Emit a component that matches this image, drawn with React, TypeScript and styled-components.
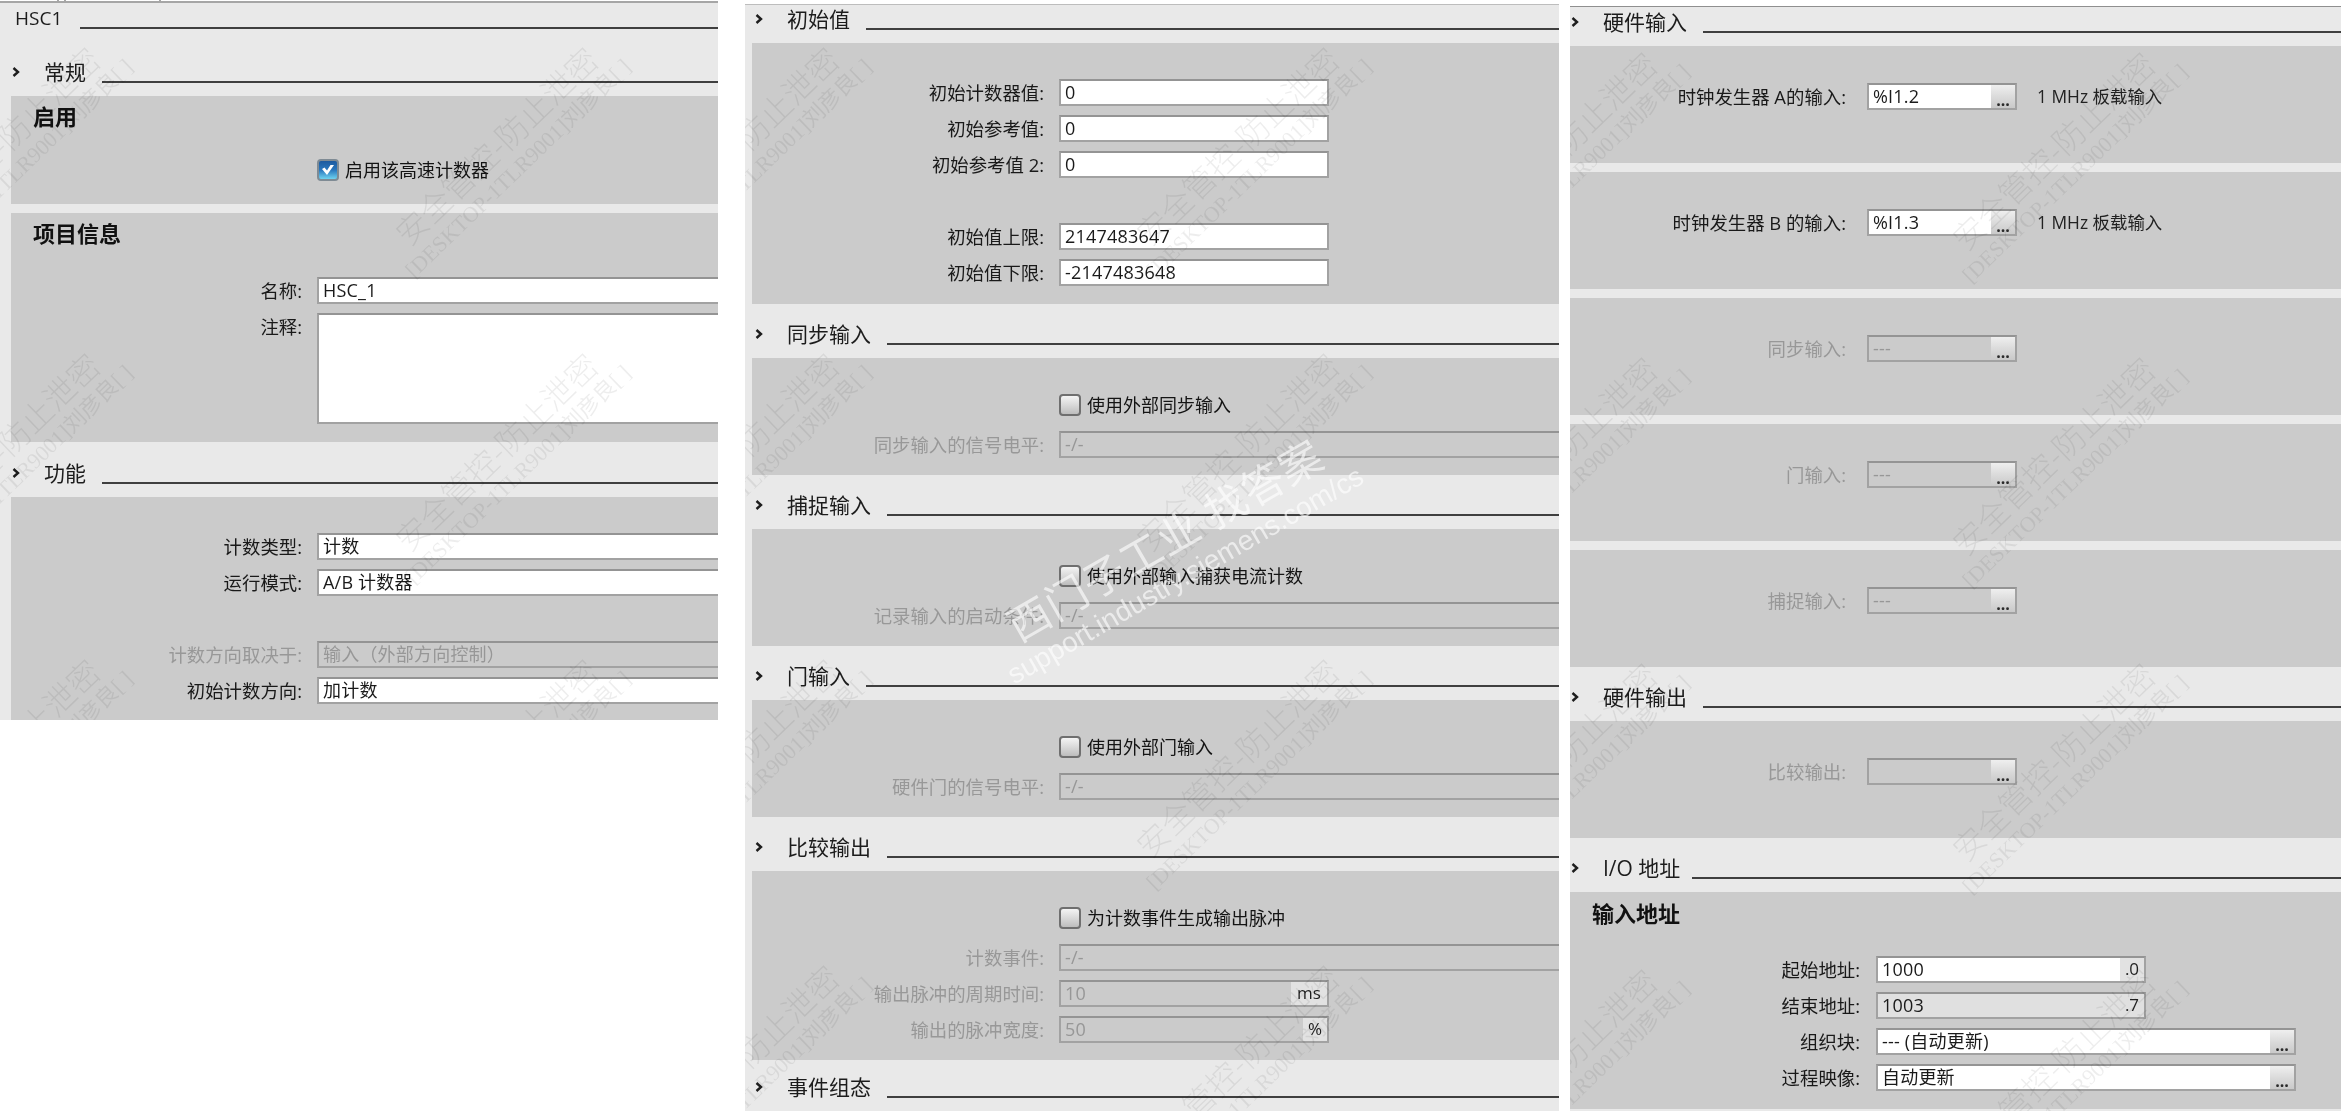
import styled, { createGlobalStyle } from 'styled-components';

const GlobalStyle = createGlobalStyle`
  html, body { margin: 0; padding: 0; background: #fff; }
  body { font-family: "Open Sans", "Noto Sans CJK SC", sans-serif; color: #161616; }
`;

const Page = styled.div`
  display: flex;
  align-items: flex-start;
  width: 2341px;
  height: 1111px;
  overflow: hidden;
  background: #fff;
  filter: blur(0.4px);
`;

const Column = styled.section<{ $width: number; $height: number; $left: number; $top: number; $label: number; $gap: number }>`
  --label: ${({ $label }) => $label}px;
  --gap: ${({ $gap }) => $gap}px;
  position: relative;
  flex: none;
  width: ${({ $width }) => $width}px;
  height: ${({ $height }) => $height}px;
  margin-left: ${({ $left }) => $left}px;
  margin-top: ${({ $top }) => $top}px;
  overflow: hidden;
  background: #e9e9e9;
`;

const TabStrip = styled.div`
  display: flex;
  height: 3px;
  background: #fff;
  border-bottom: 2px solid #a6a6a6;
  box-sizing: border-box;
`;

const TabEdge = styled.span<{ $width: number }>`
  width: ${({ $width }) => $width}px;
  border-right: 2px solid #a6a6a6;
`;

const TopEdge = styled.div<{ $dark?: boolean }>`
  height: 1px;
  background: ${({ $dark }) => ($dark ? '#8f8f8f' : '#bdbdbd')};
`;

const Header = styled.header<{ $height: number; $indent?: number }>`
  display: flex;
  align-items: flex-end;
  box-sizing: border-box;
  height: ${({ $height }) => $height}px;
  padding-left: ${({ $indent = 0 }) => $indent}px;
  padding-bottom: 12px;
`;

const Chevron = styled.svg`
  flex: none;
  width: 8px;
  height: 10px;
  margin-right: 24px;
  margin-bottom: 7px;
`;

const HeaderTitle = styled.h2<{ $small?: boolean }>`
  margin: 0;
  font-size: ${({ $small }) => ($small ? 19 : 21)}px;
  font-weight: 400;
  line-height: 24px;
  white-space: nowrap;
  color: #1c1c1c;
`;

const Rule = styled.div<{ $left?: number }>`
  flex: 1;
  height: 2px;
  margin-left: ${({ $left = 16 }) => $left}px;
  margin-bottom: 1px;
  background: #3f3f3f;
`;

const Panel = styled.div<{ $height: number; $left?: number; $top?: number; $label?: number; $gap?: number }>`
  ${({ $label }) => ($label ? `--label: ${$label}px;` : '')}
  ${({ $gap }) => ($gap ? `--gap: ${$gap}px;` : '')}
  display: flex;
  flex-direction: column;
  gap: 9px;
  box-sizing: border-box;
  height: ${({ $height }) => $height}px;
  margin-left: ${({ $left = 0 }) => $left}px;
  padding-top: ${({ $top = 36 }) => $top}px;
  overflow: hidden;
  background: #cbcbcb;
`;

const PanelGap = styled.div<{ $height: number }>`
  height: ${({ $height }) => $height}px;
`;

const PanelTitle = styled.h3<{ $after: number }>`
  margin: 0 0 ${({ $after }) => $after}px 22px;
  font-size: 22px;
  font-weight: 700;
  line-height: 24px;
  color: #111;
`;

const Row = styled.div<{ $tall?: number; $after?: number }>`
  display: grid;
  grid-template-columns: var(--label) 1fr;
  column-gap: var(--gap);
  flex: none;
  height: ${({ $tall = 27 }) => $tall}px;
  margin-bottom: ${({ $after = 0 }) => $after}px;
`;

const Blank = styled.div`
  flex: none;
  height: 27px;
`;

const Label = styled.label<{ $off?: boolean }>`
  font-size: 18.4px;
  line-height: 27px;
  text-align: right;
  white-space: nowrap;
  color: ${({ $off }) => ($off ? '#989898' : '#191919')};
`;

const Controls = styled.div`
  display: flex;
  align-items: flex-start;
  min-width: 0;
`;

const Box = styled.div<{ $width?: number; $height?: number; $off?: boolean; $readOnly?: boolean }>`
  display: flex;
  flex: none;
  box-sizing: border-box;
  width: ${({ $width }) => ($width ? `${$width}px` : 'calc(100% + 6px)')};
  height: ${({ $height = 27 }) => $height}px;
  border: 2px solid #a2a2a2;
  border-top-color: #949494;
  background: ${({ $off, $readOnly }) => ($off ? 'transparent' : $readOnly ? '#e0e0e0' : '#fff')};
`;

const Value = styled.span<{ $off?: boolean }>`
  flex: 1;
  min-width: 0;
  padding-left: 4px;
  font-size: 18px;
  line-height: 22px;
  letter-spacing: 0.2px;
  white-space: nowrap;
  color: ${({ $off }) => ($off ? '#979797' : '#1a1a1a')};
`;

const Suffix = styled.span<{ $width: number; $plain?: boolean }>`
  flex: none;
  width: ${({ $width }) => $width - 2}px;
  font-size: 17px;
  line-height: 22px;
  text-align: center;
  color: #1f1f1f;
  background: ${({ $plain }) => ($plain ? 'transparent' : '#e2e2e2')};
`;

const Browse = styled.span`
  display: flex;
  flex: none;
  align-items: flex-end;
  justify-content: center;
  width: 24px;
  font-size: 16px;
  font-weight: 700;
  line-height: 16px;
  color: #2a2a2a;
  background: linear-gradient(#efefef, #d9d9d9 55%, #c9c9c9);
`;

const Note = styled.span`
  margin-left: 20px;
  font-size: 17.4px;
  line-height: 27px;
  white-space: nowrap;
  color: #222;
`;

const CheckGroup = styled.div`
  display: flex;
  align-items: center;
  height: 22px;
  gap: 6px;
`;

const CheckBox = styled.span<{ $on?: boolean }>`
  display: flex;
  flex: none;
  align-items: center;
  justify-content: center;
  box-sizing: border-box;
  width: 22px;
  height: 22px;
  border: 2px solid ${({ $on }) => ($on ? '#7f8b94' : '#6f6f6f')};
  border-radius: 4px;
  background: ${({ $on }) =>
    $on ? 'linear-gradient(#1d5a9f, #2a77bd 50%, #6fd3f0)' : 'linear-gradient(#f4f4f4, #d9d9d9 50%, #bdbdbd)'};
`;

const CheckText = styled.span`
  font-size: 18px;
  line-height: 22px;
  white-space: nowrap;
  color: #141414;
`;

const Watermark = styled.div<{ $x: number; $y: number }>`
  position: absolute;
  left: ${({ $x }) => $x}px;
  top: ${({ $y }) => $y}px;
  display: flex;
  flex-direction: column;
  align-items: center;
  transform: translate(-50%, -50%) rotate(-44deg);
  white-space: nowrap;
  color: rgba(0, 0, 0, 0.07);
  pointer-events: none;
`;

const MarkLine = styled.span`
  font-size: 32px;
  font-weight: 300;
  line-height: 38px;
`;

const MarkId = styled.span`
  font-family: "Liberation Serif", "Noto Sans CJK SC", serif;
  font-size: 22px;
  line-height: 24px;
`;

const SiemensMark = styled.div`
  position: absolute;
  left: 428px;
  top: 550px;
  display: flex;
  flex-direction: column;
  align-items: center;
  transform: translate(-50%, -50%) rotate(-30deg);
  white-space: nowrap;
  color: rgba(255, 255, 255, 0.62);
  pointer-events: none;
`;

const SiemensTitle = styled.span`
  font-size: 42px;
  line-height: 50px;
  letter-spacing: 1px;
`;

const SiemensUrl = styled.span`
  font-family: "Liberation Sans", sans-serif;
  font-size: 28px;
  line-height: 32px;
`;

function Section({ title, height, indent, line }: { title: string; height: number; indent: number; line?: number }) {
  return (
    <Header $height={height} $indent={indent}>
      <Chevron viewBox="0 0 8 10">
        <path d="M1.5 1 L6 5 L1.5 9" fill="none" stroke="#1d1d1d" strokeWidth="2.4" />
      </Chevron>
      <HeaderTitle>{title}</HeaderTitle>
      <Rule $left={line} />
    </Header>
  );
}

type FieldProps = {
  label: string;
  value?: string;
  off?: boolean;
  readOnly?: boolean;
  width?: number;
  suffix?: string;
  suffixWidth?: number;
  browse?: boolean;
  note?: string;
};

function Field({ label, value, off, readOnly, width, suffix, suffixWidth = 26, browse, note }: FieldProps) {
  return (
    <Row>
      <Label $off={off}>{label}</Label>
      <Controls>
        <Box $width={width} $off={off} $readOnly={readOnly}>
          <Value $off={off}>{value}</Value>
          {suffix && (
            <Suffix $width={suffixWidth} $plain={readOnly}>
              {suffix}
            </Suffix>
          )}
          {browse && <Browse>...</Browse>}
        </Box>
        {note && <Note>{note}</Note>}
      </Controls>
    </Row>
  );
}

function Check({ text, on, after = 6 }: { text: string; on?: boolean; after?: number }) {
  return (
    <Row $tall={22} $after={after}>
      <span />
      <CheckGroup>
        <CheckBox $on={on}>
          {on && (
            <svg width="16" height="14" viewBox="0 0 16 14">
              <path d="M2 6 L7 12 L14 2 L10.5 2 L7 7.5 L4.5 4.5 Z" fill="#fff" />
            </svg>
          )}
        </CheckBox>
        <CheckText>{text}</CheckText>
      </CheckGroup>
    </Row>
  );
}

function Mark({ x, y }: { x: number; y: number }) {
  return (
    <Watermark $x={x} $y={y}>
      <MarkLine>安全管控-防止泄密</MarkLine>
      <MarkId>[DESKTOP-1TLR9001]刘彦良[ ]</MarkId>
    </Watermark>
  );
}

export default function App() {
  return (
    <Page>
      <GlobalStyle />

      <Column $width={718} $height={720} $left={0} $top={0} $label={291} $gap={15}>
        <TabStrip>
          <TabEdge $width={57} />
          <TabEdge $width={5} />
          <TabEdge $width={93} />
        </TabStrip>
        <Header $height={39} $indent={15}>
          <HeaderTitle $small>HSC1</HeaderTitle>
          <Rule $left={18} />
        </Header>
        <Section title="常规" height={54} indent={12} />
        <Panel $height={108} $left={11} $top={8}>
          <PanelTitle $after={22}>启用</PanelTitle>
          <Check text="启用该高速计数器" on after={0} />
        </Panel>
        <PanelGap $height={9} />
        <Panel $height={229} $left={11} $top={8}>
          <PanelTitle $after={23}>项目信息</PanelTitle>
          <Field label="名称:" value="HSC_1" />
          <Row $tall={111}>
            <Label>注释:</Label>
            <Controls>
              <Box $height={111} />
            </Controls>
          </Row>
        </Panel>
        <Section title="功能" height={55} indent={12} />
        <Panel $height={223} $left={11}>
          <Field label="计数类型:" value="计数" />
          <Field label="运行模式:" value="A/B 计数器" />
          <Blank />
          <Field label="计数方向取决于:" value="输入（外部方向控制）" off />
          <Field label="初始计数方向:" value="加计数" />
        </Panel>
        {[7, 505].flatMap((x) => [155, 461, 767].map((y) => <Mark key={`${x}-${y}`} x={x} y={y} />))}
      </Column>

      <Column $width={814} $height={1107} $left={27} $top={4} $label={292} $gap={15}>
        <TopEdge />
        <Section title="初始值" height={38} indent={10} />
        <Panel $height={261} $left={7}>
          <Field label="初始计数器值:" value="0" width={270} />
          <Field label="初始参考值:" value="0" width={270} />
          <Field label="初始参考值 2:" value="0" width={270} />
          <Blank />
          <Field label="初始值上限:" value="2147483647" width={270} />
          <Field label="初始值下限:" value="-2147483648" width={270} />
        </Panel>
        <Section title="同步输入" height={54} indent={10} />
        <Panel $height={117} $left={7}>
          <Check text="使用外部同步输入" />
          <Field label="同步输入的信号电平:" value="-/-" off />
        </Panel>
        <Section title="捕捉输入" height={54} indent={10} />
        <Panel $height={117} $left={7}>
          <Check text="使用外部输入捕获电流计数" />
          <Field label="记录输入的启动条件:" value="-/-" off />
        </Panel>
        <Section title="门输入" height={54} indent={10} />
        <Panel $height={117} $left={7}>
          <Check text="使用外部门输入" />
          <Field label="硬件门的信号电平:" value="-/-" off />
        </Panel>
        <Section title="比较输出" height={54} indent={10} />
        <Panel $height={189} $left={7}>
          <Check text="为计数事件生成输出脉冲" />
          <Field label="计数事件:" value="-/-" off />
          <Field label="输出脉冲的周期时间:" value="10" off width={270} suffix="ms" suffixWidth={38} />
          <Field label="输出的脉冲宽度:" value="50" off width={270} suffix="%" />
        </Panel>
        <Section title="事件组态" height={51} indent={10} />
        {[1, 501].flatMap((x) => [151, 457, 763, 1069].map((y) => <Mark key={`${x}-${y}`} x={x} y={y} />))}
        <SiemensMark>
          <SiemensTitle>西门子工业 找答案</SiemensTitle>
          <SiemensUrl>support.industry.siemens.com/cs</SiemensUrl>
        </SiemensMark>
      </Column>

      <Column $width={771} $height={1105} $left={11} $top={6} $label={276} $gap={21}>
        <TopEdge $dark />
        <Section title="硬件输入" height={39} indent={1} />
        <Panel $height={117} $top={37}>
          <Field label="时钟发生器 A的输入:" value="%I1.2" width={150} browse note="1 MHz 板载输入" />
        </Panel>
        <PanelGap $height={9} />
        <Panel $height={117} $top={37}>
          <Field label="时钟发生器 B 的输入:" value="%I1.3" width={150} browse note="1 MHz 板载输入" />
        </Panel>
        <PanelGap $height={9} />
        <Panel $height={117} $top={37}>
          <Field label="同步输入:" value="---" off width={150} browse />
        </Panel>
        <PanelGap $height={9} />
        <Panel $height={117} $top={37}>
          <Field label="门输入:" value="---" off width={150} browse />
        </Panel>
        <PanelGap $height={9} />
        <Panel $height={117} $top={37}>
          <Field label="捕捉输入:" value="---" off width={150} browse />
        </Panel>
        <Section title="硬件输出" height={54} indent={1} />
        <Panel $height={117} $top={37}>
          <Field label="比较输出:" off width={150} browse />
        </Panel>
        <Section title="I/O 地址" height={54} indent={1} line={12} />
        <Panel $height={217} $top={9} $label={290} $gap={16}>
          <PanelTitle $after={22}>输入地址</PanelTitle>
          <Field label="起始地址:" value="1000" width={270} suffix=".0" />
          <Field label="结束地址:" value="1003" width={270} suffix=".7" readOnly />
          <Field label="组织块:" value="--- (自动更新)" width={420} browse />
          <Field label="过程映像:" value="自动更新" width={420} browse />
        </Panel>
        {[-6, 492].flatMap((x) => [154, 459, 765, 1071].map((y) => <Mark key={`${x}-${y}`} x={x} y={y} />))}
      </Column>
    </Page>
  );
}
